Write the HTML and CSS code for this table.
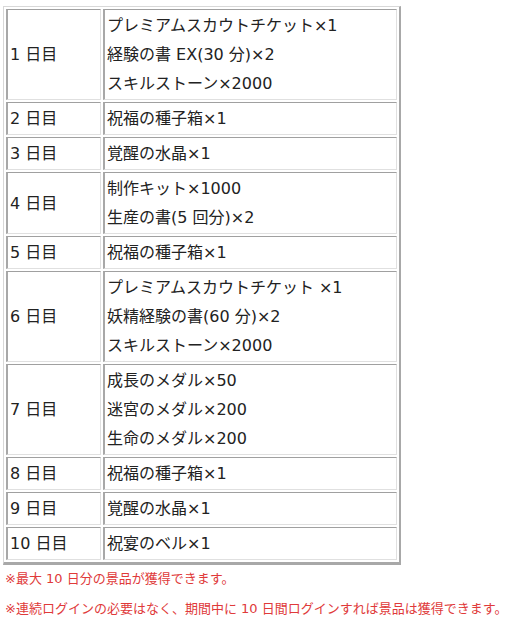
FILE: index.html
```html
<!DOCTYPE html>
<html lang="ja">
<head>
<meta charset="utf-8">
<link rel="stylesheet" href="styles.css">
</head>
<body>
<table class="rewards">
  <tr><td class="day">1 日目</td><td class="items">プレミアムスカウトチケット×1<br>経験の書 EX(30 分)×2<br>スキルストーン×2000</td></tr>
  <tr><td class="day">2 日目</td><td class="items">祝福の種子箱×1</td></tr>
  <tr><td class="day">3 日目</td><td class="items">覚醒の水晶×1</td></tr>
  <tr><td class="day">4 日目</td><td class="items">制作キット×1000<br>生産の書(5 回分)×2</td></tr>
  <tr><td class="day">5 日目</td><td class="items">祝福の種子箱×1</td></tr>
  <tr><td class="day">6 日目</td><td class="items">プレミアムスカウトチケット ×1<br>妖精経験の書(60 分)×2<br>スキルストーン×2000</td></tr>
  <tr><td class="day">7 日目</td><td class="items">成長のメダル×50<br>迷宮のメダル×200<br>生命のメダル×200</td></tr>
  <tr><td class="day">8 日目</td><td class="items">祝福の種子箱×1</td></tr>
  <tr><td class="day">9 日目</td><td class="items">覚醒の水晶×1</td></tr>
  <tr><td class="day">10 日目</td><td class="items">祝宴のベル×1</td></tr>
</table>
<p class="note first">※最大 10 日分の景品が獲得できます。</p>
<p class="note">※連続ログインの必要はなく、期間中に 10 日間ログインすれば景品は獲得できます。</p>
</body>
</html>
```

FILE: styles.css
```css
html, body {
  background: #ffffff;
}
body {
  margin: 0;
  padding: 6px 0 0 3px;
  font-family: "DejaVu Sans", "Noto Sans CJK JP", sans-serif;
  color: #222222;
}
.rewards {
  width: 398px;
  border-collapse: separate;
  border-spacing: 2px;
  border-top: 1px solid #d8d8d8;
  border-left: 1px solid #d8d8d8;
  border-right: 2px solid #a8a8a8;
  border-bottom: 3px solid #a8a8a8;
}
.rewards td {
  font-size: 16px;
  line-height: 29px;
  padding: 1px 2px 1px 3px;
  border-top: 1px solid #a0a0a0;
  border-left: 2px solid #a8a8a8;
  border-right: 1px solid #e0e0e0;
  border-bottom: 1px solid #e0e0e0;
  vertical-align: middle;
  text-align: left;
  white-space: nowrap;
}
.rewards td.day {
  width: 88px;
  padding-left: 2px;
}
.rewards td.items {
  padding-left: 2px;
}
.note {
  margin: 10px 0 0 2px;
  font-size: 13px;
  line-height: 20px;
  color: #e03a3a;
}
.note.first {
  margin-top: 4px;
}
```
